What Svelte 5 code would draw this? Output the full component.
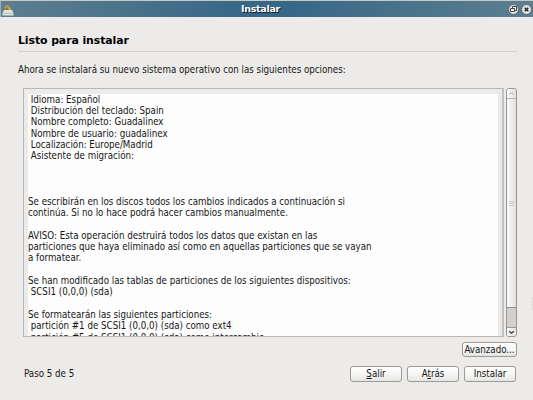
<script>
  const options = [
    ' Idioma: Español',
    ' Distribución del teclado: Spain',
    ' Nombre completo: Guadalinex',
    ' Nombre de usuario: guadalinex',
    ' Localización: Europe/Madrid',
    ' Asistente de migración:',
    '', '', '',
    'Se escribirán en los discos todos los cambios indicados a continuación si',
    'continúa. Si no lo hace podrá hacer cambios manualmente.',
    '',
    'AVISO: Esta operación destruirá todos los datos que existan en las',
    'particiones que haya eliminado así como en aquellas particiones que se vayan',
    'a formatear.',
    '',
    'Se han modificado las tablas de particiones de los siguientes dispositivos:',
    ' SCSI1 (0,0,0) (sda)',
    '',
    'Se formatearán las siguientes particiones:',
    ' partición #1 de SCSI1 (0,0,0) (sda) como ext4',
    ' partición #5 de SCSI1 (0,0,0) (sda) como intercambio'
  ];
</script>

<div class="window">
  <header>
    <svg class="disk" width="12" height="12" viewBox="0 0 12 12">
      <path d="M2.6 7 3.2 2.4Q6 0 8.6 2.7L9.4 7Z" fill="#7f9166" />
      <path d="M2.5 4Q4 1 6.5 2" fill="none" stroke="#d78a46" stroke-width="1.6" />
      <path d="M5 4.2Q8 3 8.6 6" fill="none" stroke="#ddb23e" stroke-width="1.3" />
      <path d="M4 6 5.5 4" stroke="#a94b3d" stroke-width="1.2" />
      <path d="M2 6h8l1.5 3v2.5h-11V9Z" fill="#e3e3df" />
      <path d="M1 9.3h10" stroke="#a8a9a5" stroke-width=".7" />
    </svg>
    <h1>Instalar</h1>
    <div class="controls">
      <svg width="11" height="11" viewBox="0 0 11 11">
        <circle cx="5.5" cy="5.5" r="4.9" fill="#e9e9e7" stroke="#3b4c58" stroke-width=".7" />
        <path d="M4.5 4.5v-2h4v4h-2M2.5 4.5h4v3h-4Z" fill="none" stroke="#34383b" stroke-width=".9" />
      </svg>
      <svg width="11" height="11" viewBox="0 0 11 11">
        <circle cx="5.5" cy="5.5" r="4.9" fill="#e9e9e7" stroke="#3b4c58" stroke-width=".7" />
        <path d="m3.7 3.7 3.6 3.6m0-3.6L3.7 7.3" stroke="#25282a" stroke-width="1.5" />
      </svg>
    </div>
  </header>

  <main>
    <h2>Listo para instalar</h2>
    <p>Ahora se instalará su nuevo sistema operativo con las siguientes opciones:</p>
    <section>
      <div class="frame">
        <div class="paper">
          {#each options as line}<div class="line">{line}</div>{/each}
        </div>
      </div>
      <div class="scrollbar">
        <div class="arrow up"><svg width="7" height="5" viewBox="0 0 7 5"><path d="m1.2 3.5 2.3-2 2.3 2" fill="none" stroke="#aaa" /></svg></div>
        <div class="thumb"><i></i><i></i><i></i></div>
        <div class="trough"></div>
        <div class="arrow down"><svg width="7" height="5" viewBox="0 0 7 5"><path d="m1.2 1.3 2.3 2 2.3-2" fill="none" stroke="#333" stroke-width="1.2" /></svg></div>
      </div>
    </section>
    <div class="advanced"><button>Avanzado...</button></div>
    <footer>
      <span class="step">Paso 5 de 5</span>
      <button><u>S</u>alir</button>
      <button>A<u>t</u>rás</button>
      <button>Instalar</button>
    </footer>
  </main>
  <div class="edge"></div>
</div>

<style>
  :global(body) { margin: 0; overflow: hidden; }
  .window {
    position: relative; box-sizing: border-box; width: 533px; height: 400px;
    background: #ecebe9; color: #161616; overflow: hidden;
    font-family: "DejaVu Sans Condensed", "DejaVu Sans", sans-serif;
    font-stretch: condensed; font-size: 9.68px;
  }
  header {
    box-sizing: border-box; height: 17px; border-top: 1px solid #c9c8c1;
    border-left: 1px solid #9eb0b7; padding: 0 1px 0 1px;
    display: grid; grid-template-columns: 26px 1fr 26px; align-items: center;
    background: linear-gradient(90deg, #5c7f91, #376787 46%, #376787 54%, #5c7f91);
  }
  .disk { margin-top: 1px; }
  h1 {
    margin: 0; padding-right: 13px; text-align: center; color: #fff;
    font: bold 9.5px/16px "DejaVu Sans", sans-serif;
    letter-spacing: -.3px; text-shadow: 1px 1px 0 #111c25;
  }
  .controls { display: flex; gap: 2px; justify-content: flex-end; }
  main { padding: 0 16px 0 18px; }
  h2 {
    box-sizing: border-box; margin: 0; height: 35px; border-bottom: 1px solid #d0cfcd;
    padding-top: 16px; font: bold 10.9px/16px "DejaVu Sans", sans-serif; letter-spacing: -.08px; color: #000;
  }
  p { margin: 0; height: 36px; line-height: 36px; white-space: nowrap; }
  section { display: flex; gap: 2px; margin-left: 5px; height: 249px; }
  .frame {
    box-sizing: border-box; flex: 1; border: 1px solid #b9b8b6;
    border-left-color: #b5b4b2; border-right: 2px solid #c3c2c0;
    padding: 5px 4px 0; background: #ecebe9; overflow: hidden;
  }
  .paper { height: 242px; overflow: hidden; background: #fdfdfd; }
  .line { height: 11.34px; line-height: 11.34px; white-space: pre; }
  .line:first-child { margin-top: -.3px; }
  .scrollbar {
    box-sizing: border-box; width: 11px; border: 1px solid #969593; border-radius: 3px;
    display: flex; flex-direction: column; background: #d1d0ce; overflow: hidden;
  }
  .arrow { height: 9px; display: grid; place-items: center; background: linear-gradient(90deg, #fafafa, #e4e3e1); }
  .up { border-bottom: 1px solid #b5b4b2; }
  .down { height: 8px; border-top: 1px solid #969593; }
  .thumb {
    height: 208px; display: flex; flex-direction: column; gap: 1px; align-items: center; justify-content: center;
    border-bottom: 1px solid #8e8d8b; background: linear-gradient(90deg, #fafafa, #e1e0de);
  }
  .thumb i { height: 1px; width: 5px; background: #c9c8c6; }
  .trough { flex: 1; }
  .advanced { display: flex; justify-content: flex-end; padding-top: 5px; }
  button {
    box-sizing: border-box; padding: 0; margin: 0; height: 16px; width: 52px;
    border: 1px solid #9b9a98; border-radius: 3px;
    background: linear-gradient(#fff, #f6f6f5 50%, #e6e5e3);
    font: inherit; line-height: 14px; color: #161616; text-align: center; white-space: nowrap;
  }
  .advanced button { width: 55px; height: 15px; line-height: 13px; }
  footer { display: flex; align-items: center; gap: 5px; margin-top: 9px; padding-right: 1px; }
  .step { flex: 1; margin: -1px 0 0 6px; }
  u { text-decoration-thickness: 1px; text-underline-offset: 1px; }
  .edge { position: absolute; right: 0; top: 297px; width: 1px; height: 13px; background: #dddcda; }
</style>
